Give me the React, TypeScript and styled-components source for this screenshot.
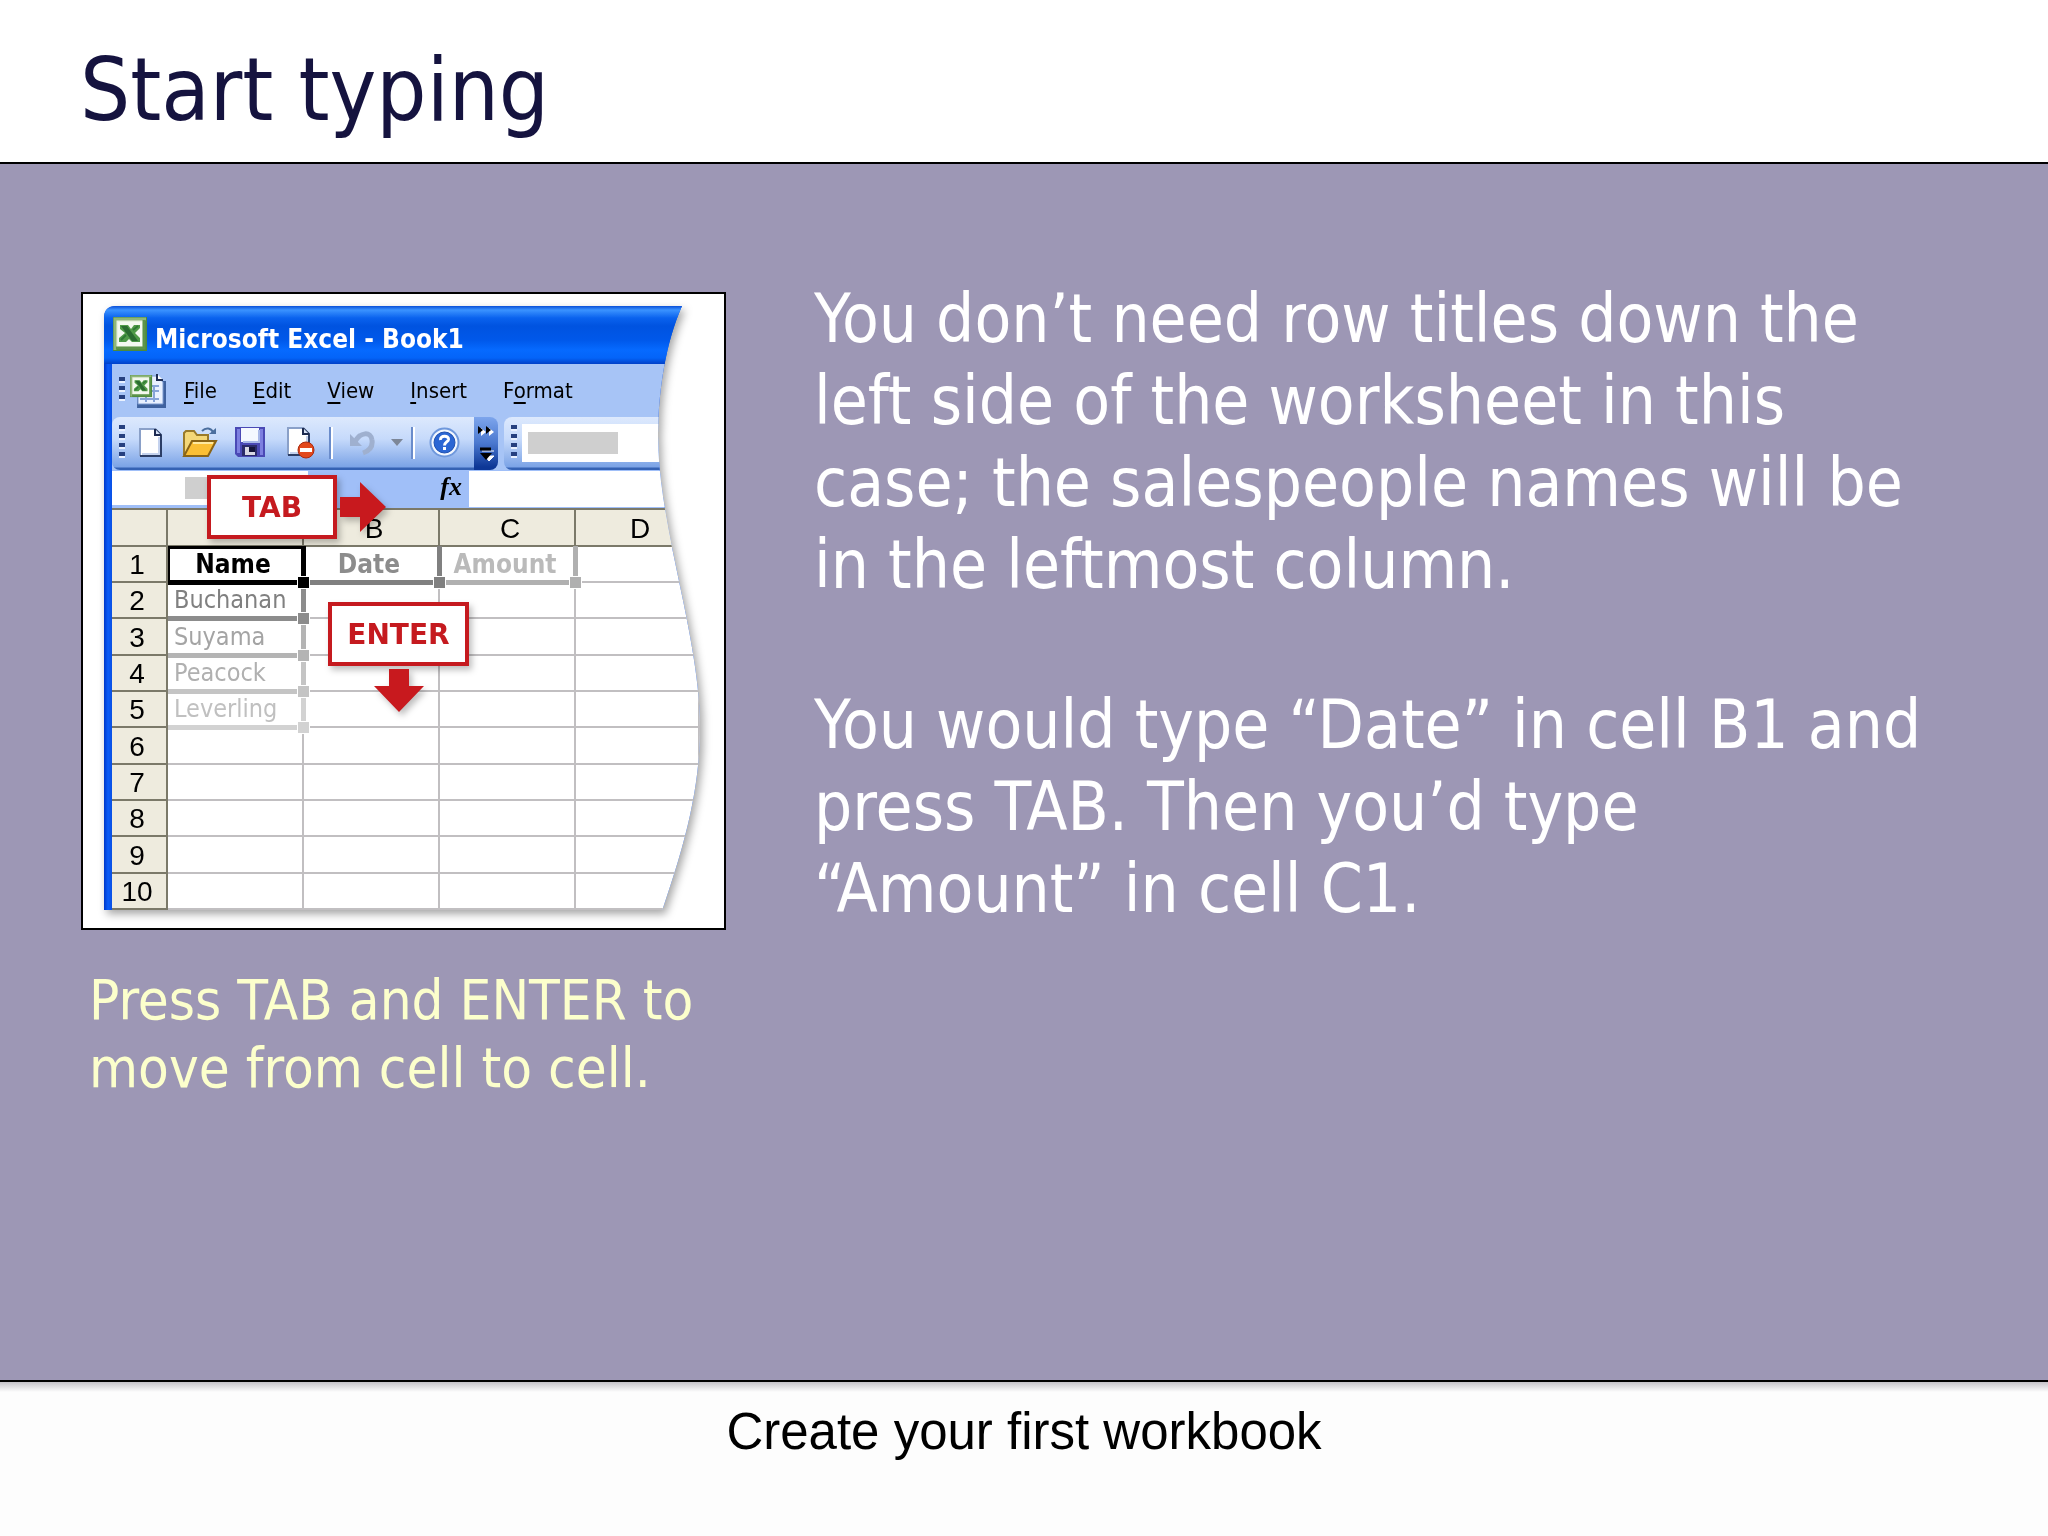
import React from "react";
import styled, { createGlobalStyle, css } from "styled-components";

const slideFont = `"DejaVu Sans Condensed", "Noto Sans", sans-serif`;

const GlobalStyle = createGlobalStyle`
  *, *::before, *::after { box-sizing: border-box; }
  body { margin: 0; background: #fff; }
  h1, p { margin: 0; font-weight: 400; }
  button { font: inherit; color: inherit; }
`;

/* ---------- slide ---------- */

const Slide = styled.div`
  display: flex;
  flex-direction: column;
  min-height: 100vh;
  font-family: ${slideFont};
`;

const Header = styled.header`
  display: flex;
  align-items: center;
  height: 164px;
  padding: 18px 80px 0;
  border-bottom: 2px solid #000;
`;

const Title = styled.h1`
  font-size: 88px;
  line-height: 108px;
  color: #15133f;
`;

const Main = styled.main`
  display: flex;
  flex: 1;
  align-items: flex-start;
  gap: 88px;
  padding: 128px 108px 80px 81px;
  background: #9d97b5;
`;

const Figure = styled.figure`
  flex: none;
  width: 645px;
  margin: 0;
`;

const Frame = styled.div`
  padding: 12px 22px 18px 21px;
  border: 2px solid #000;
  background: #fff;
`;

const Caption = styled.figcaption`
  padding: 36px 0 0 8px;
  font-size: 56px;
  line-height: 68px;
  color: #fcffcc;
`;

const Body = styled.section`
  display: flex;
  flex: 1;
  flex-direction: column;
  gap: 78px;
  margin-top: -14px;
  font-size: 67px;
  line-height: 82px;
  color: #fff;
`;

const Footer = styled.footer`
  height: 156px;
  padding-top: 20px;
  border-top: 2px solid #000;
  background: linear-gradient(#c4c2c8, #fdfdfd 10px);
  font: 51px/60px "Liberation Sans", Arial, sans-serif;
  text-align: center;
  color: #000;
`;

/* ---------- spreadsheet window ---------- */

const WindowShadow = styled.div`
  position: relative;
  filter: drop-shadow(3px 4px 4px rgba(0, 0, 0, 0.35));
`;

const Window = styled.div`
  width: 596px;
  padding-left: 8px;
  background: linear-gradient(90deg, #0038c8, #0a5cf8 4px, #0a50e4 8px);
  clip-path: path("M12 0H578C562 36 554 84 554 130C554 220 596 330 596 421C596 485 580 540 558 605H0V12Q0 0 12 0Z");
  color: #000;
`;

const TitleBar = styled.div`
  display: flex;
  align-items: center;
  gap: 8px;
  height: 58px;
  margin-left: -8px;
  padding: 0 0 2px 9px;
  background: linear-gradient(#0a4fd8 0, #3b93ff 4px, #0a62ee 12px, #0053e0 20px, #0058ea 34px, #066aff 44px, #0464f8 52px, #0040c8 58px);
  color: #fff;
  font-size: 26px;
  font-weight: 700;
`;

const WindowTitle = styled.span`
  padding-top: 10px;
  line-height: 30px;
`;

const MenuBar = styled.div`
  display: flex;
  align-items: center;
  height: 53px;
  padding-left: 7px;
  background: #a7c4f6;
`;

const DocIcon = styled.span`
  display: flex;
  margin: 0 17px 0 5px;
`;

const MenuList = styled.div`
  display: flex;
  gap: 36px;
`;

const MenuButton = styled.button`
  padding: 0;
  border: 0;
  background: none;
  font-size: 22px;
  line-height: 28px;
  u {
    text-decoration-thickness: 2px;
    text-underline-offset: 4px;
  }
`;

const Grip = styled.span<{ $dots: number }>`
  flex: none;
  width: 6px;
  height: ${(p) => p.$dots * 9}px;
  background: repeating-linear-gradient(#26407f 0 4px, #e9f1ff 4px 6px, transparent 6px 9px);
`;

const ToolRow = styled.div`
  display: flex;
  height: 53px;
  background: #a7c4f6;
`;

const barShade = css`
  background: linear-gradient(#dde9fd, #c6dafb 22px, #7ba3e6 50px, #3562b4 51px);
`;

const Toolbar = styled.div`
  ${barShade}
  display: flex;
  align-items: center;
  width: 362px;
  padding: 0 0 2px 7px;
  border-radius: 8px 0 0 8px;
`;

const FontToolbar = styled.div`
  ${barShade}
  display: flex;
  flex: 1;
  align-items: center;
  gap: 5px;
  margin-left: 6px;
  padding: 0 0 2px 7px;
  border-radius: 8px 0 0 8px;
`;

const ToolButton = styled.button<{ $narrow?: boolean }>`
  display: flex;
  align-items: center;
  justify-content: center;
  width: ${(p) => (p.$narrow ? 20 : 50)}px;
  height: 44px;
  padding: 0;
  border: 0;
  background: none;
`;

const Separator = styled.span`
  width: 4px;
  height: 32px;
  margin: 0 4px;
  border-left: 2px solid #6a8ccb;
  border-right: 2px solid #fff;
`;

const Overflow = styled.button`
  display: flex;
  flex-direction: column;
  align-items: center;
  justify-content: center;
  width: 24px;
  padding: 0;
  border: 0;
  border-radius: 0 8px 8px 0;
  background: linear-gradient(#7da5ec, #4a78cf 26px, #0d3796 50px);
`;

const FontBox = styled.div`
  flex: 1;
  height: 38px;
  padding: 8px 6px;
  background: #fff;
`;

const Placeholder = styled.span<{ $width: number }>`
  display: block;
  width: ${(p) => p.$width}px;
  height: 22px;
  background: #cfcfcf;
`;

const FormulaRow = styled.div`
  display: flex;
  height: 38px;
  padding: 1px 0;
  background: #a0bff8;
`;

const NameBox = styled.div`
  width: 196px;
  height: 34px;
  padding: 6px 0 0 73px;
  background: #fff;
`;

const FxLabel = styled.label`
  flex: 1;
  padding-right: 7px;
  font: italic 700 26px/32px "Liberation Serif", serif;
  text-align: right;
`;

const FormulaInput = styled.input`
  width: 231px;
  padding: 0;
  border: 0;
  background: #fff;
`;

/* ---------- sheet ---------- */

const Sheet = styled.table`
  width: 588px;
  border-spacing: 0;
  table-layout: fixed;
  background: #fff;
  thead tr { height: 39px; }
  tbody tr { height: 36px; }
  tbody tr:nth-child(3n) { height: 37px; }
`;

const HeadCell = styled.th<{ $top?: boolean }>`
  padding: ${(p) => (p.$top ? "3px 0 0 6px" : "2px 4px 0 0")};
  border: 0 solid #7b7969;
  border-width: ${(p) => (p.$top ? "2px 2px 2px 0" : "0 2px 2px 0")};
  background: #eeebde;
  font: 400 28px/32px "Liberation Sans", Arial, sans-serif;
`;

const Cell = styled.td<{ $text?: string; $line?: string; $bold?: boolean; $framed?: boolean }>`
  position: relative;
  padding: 0 0 0 6px;
  border: 0 solid #c1bfc1;
  border-width: 0 2px 2px 0;
  font-size: 25px;
  line-height: 30px;
  ${(p) => p.$bold && css`
    padding: 0 4px 0 0;
    font-size: 26px;
    font-weight: 700;
    text-align: center;
  `}
  ${(p) => p.$text && css`
    color: ${p.$text};
    &::before {
      content: "";
      position: absolute;
      z-index: 1;
      inset: -1px -4px -4px 0;
      border: 0 solid ${p.$line};
      border-width: ${p.$framed ? "3px 5px 5px 2px" : "0 5px 5px 0"};
    }
    &::after {
      content: "";
      position: absolute;
      z-index: 2;
      right: -7px;
      bottom: -7px;
      width: 11px;
      height: 11px;
      background: ${p.$line};
      outline: 1px solid #fff;
    }
  `}
`;

/* ---------- key callouts ---------- */

const Callout = styled.div<{ $x: number; $y: number; $down?: boolean }>`
  position: absolute;
  z-index: 3;
  left: ${(p) => p.$x}px;
  top: ${(p) => p.$y}px;
  display: flex;
  flex-direction: ${(p) => (p.$down ? "column" : "row")};
  align-items: center;
  gap: 3px;
  filter: drop-shadow(3px 4px 3px rgba(0, 0, 0, 0.25));
`;

const Key = styled.kbd<{ $width: number }>`
  width: ${(p) => p.$width}px;
  height: 64px;
  border: 4px solid #c51a1f;
  background: #fff;
  color: #c51a1f;
  font: 700 28px/58px "DejaVu Sans", Verdana, sans-serif;
  text-align: center;
`;

/* ---------- icons ---------- */

const ExcelTile = () => (
  <g>
    <rect x="1" y="1" width="32" height="32" fill="#e8f2e0" stroke="#4d8a3c" strokeWidth="2" />
    <path d="M2 33V2H33" fill="none" stroke="#8fb67a" strokeWidth="3" />
    <path d="M3 31H31V3" fill="none" stroke="#5c944a" strokeWidth="3" />
    <rect x="5" y="5" width="24" height="24" fill="#f4f9f0" />
    <path d="M7 8H15L18 12L21 8H27V11L22 16L27 21V25H19L16 22L13 25H6V21L12 16L7 12Z" fill="#4f9a47" />
    <path d="M8 9H14L25 24H19Z" fill="#2a6b30" />
    <path d="M8 23L13 18M20 13L25 9" stroke="#2f7a35" strokeWidth="2" />
  </g>
);

const ExcelIcon = () => (
  <svg width="34" height="34" viewBox="0 0 34 34"><ExcelTile /></svg>
);

const WorkbookIcon = () => (
  <svg width="37" height="36" viewBox="0 0 37 36">
    <path d="M8 8H36V35H7Z" fill="#3f629f" />
    <path d="M8 3H26L33 9V31H8Z" fill="#e9f1ff" stroke="#7c9ad0" strokeWidth="1" />
    <path d="M27 1V7H33" fill="#fff" stroke="#1d2c52" strokeWidth="2" />
    <path d="M22 13H29M22 18H29M10 26H29M16 22V29M24 12V29" stroke="#87a4d8" strokeWidth="2" />
    <g transform="translate(0 2) scale(.65)"><ExcelTile /></g>
  </svg>
);

const PageShape = () => (
  <g>
    <path d="M2 2H17L23 8V29H2Z" fill="#fff" />
    <path d="M2 29V2H17" fill="none" stroke="#8aa0c8" strokeWidth="2" />
    <path d="M17 2L23 8V29H2" fill="none" stroke="#2c3e66" strokeWidth="2" />
    <path d="M4 27H21V10" fill="none" stroke="#c4d2ee" strokeWidth="2" />
    <path d="M17 2V8H23" fill="#d6e1f5" stroke="#1c2a50" strokeWidth="2" />
  </g>
);

const NewIcon = () => (
  <svg width="25" height="31" viewBox="0 0 25 31"><PageShape /></svg>
);

const OpenIcon = () => (
  <svg width="36" height="31" viewBox="0 0 36 31">
    <path d="M2 28V6L4 4H12L15 8H26V14" fill="#f4d778" stroke="#9a7a2a" strokeWidth="2" />
    <path d="M2 29L10 14H34L26 29Z" fill="#fbbf35" stroke="#8a6416" strokeWidth="2" />
    <path d="M11 16H31" stroke="#ffe9a0" strokeWidth="2" />
    <path d="M20 4C24 0 29 1 31 5" fill="none" stroke="#4c6f9e" strokeWidth="2" />
    <path d="M27 7H34V1Z" fill="#4c6f9e" />
  </svg>
);

const SaveIcon = () => (
  <svg width="31" height="31" viewBox="0 0 31 31">
    <path d="M0 0H30V30H3L0 27Z" fill="#4a49b5" />
    <path d="M2 2H5V26H2ZM25 2H28V28H25Z" fill="#7d7fe0" />
    <rect x="6" y="1" width="18" height="14" fill="#f4f8ff" />
    <path d="M24 3V15H8" fill="none" stroke="#a8b8e8" strokeWidth="2" />
    <rect x="7" y="18" width="15" height="11" fill="#2b2b6a" />
    <rect x="10" y="20" width="10" height="8" fill="#d8d8e4" />
    <rect x="14" y="20" width="6" height="5" fill="#15153a" />
  </svg>
);

const PermissionIcon = () => (
  <svg width="29" height="33" viewBox="0 0 29 33">
    <PageShape />
    <circle cx="20" cy="24" r="8" fill="#e2481c" stroke="#a82a10" strokeWidth="1" />
    <rect x="14" y="22" width="12" height="4" fill="#fff" />
  </svg>
);

const UndoIcon = () => (
  <svg width="27" height="26" viewBox="0 0 27 26">
    <path d="M6 12C11 2 22 1 23 10C24 17 20 21 14 23" fill="none" stroke="#9fb0cf" strokeWidth="5" />
    <path d="M1 4V16H13Z" fill="#9fb0cf" />
  </svg>
);

const CaretIcon = () => (
  <svg width="12" height="7" viewBox="0 0 12 7"><path d="M0 0H12L6 7Z" fill="#7d8798" /></svg>
);

const HelpIcon = () => (
  <svg width="31" height="31" viewBox="0 0 31 31">
    <circle cx="15.5" cy="15.5" r="14" fill="#f2f7ff" stroke="#6f98dc" strokeWidth="2" />
    <circle cx="15.5" cy="15.5" r="10.5" fill="#2b66d4" stroke="#1d4fae" strokeWidth="1" />
    <path d="M11.5 13C11 8 20 8 19.5 12.5C19 15 15.5 15 15.5 18.5" fill="none" stroke="#fff" strokeWidth="3" />
    <rect x="14" y="20" width="3" height="3" fill="#fff" />
  </svg>
);

const OverflowIcon = () => (
  <svg width="18" height="38" viewBox="0 0 18 38">
    <path d="M4 3L9 7L4 11ZM12 3L17 7L12 11Z" fill="#fff" />
    <path d="M1 1L6 5L1 9ZM9 1L14 5L9 9Z" fill="#000" />
    <path d="M5 26H17M8 31H17L12 36Z" fill="#fff" stroke="#fff" strokeWidth="1" />
    <path d="M3 24H14" stroke="#000" strokeWidth="3" />
    <path d="M3 28H15L9 35Z" fill="#000" />
  </svg>
);

const ArrowRight = () => (
  <svg width="46" height="50" viewBox="0 0 46 50"><path d="M0 15H20V0L46 25L20 50V35H0Z" fill="#c8191e" /></svg>
);

const ArrowDown = () => (
  <svg width="50" height="43" viewBox="0 0 50 43"><path d="M15 0H35V17H50L25 43L0 17H15Z" fill="#c8191e" /></svg>
);

/* ---------- data ---------- */

const menus: [string, string, string][] = [
  ["", "F", "ile"],
  ["", "E", "dit"],
  ["", "V", "iew"],
  ["", "I", "nsert"],
  ["F", "o", "rmat"],
];

type CellData = { text: string; color: string; line: string; bold?: boolean; framed?: boolean };

const cells: Record<string, CellData> = {
  A1: { text: "Name", color: "#000", line: "#000", bold: true, framed: true },
  B1: { text: "Date", color: "#8c8c8c", line: "#808080", bold: true },
  C1: { text: "Amount", color: "#bababa", line: "#b0b0b0", bold: true },
  A2: { text: "Buchanan", color: "#808080", line: "#8c8c8c" },
  A3: { text: "Suyama", color: "#a4a4a4", line: "#b4b4b4" },
  A4: { text: "Peacock", color: "#b0b0b0", line: "#c4c4c4" },
  A5: { text: "Leverling", color: "#c0c0c0", line: "#d2d2d2" },
};

const columns = ["A", "B", "C", "D"];
const rows = Array.from({ length: 10 }, (_, i) => i + 1);

const ExcelWindow = () => (
  <WindowShadow>
    <Window>
      <TitleBar>
        <ExcelIcon />
        <WindowTitle>Microsoft Excel - Book1</WindowTitle>
      </TitleBar>
      <MenuBar>
        <Grip $dots={3} />
        <DocIcon><WorkbookIcon /></DocIcon>
        <MenuList>
          {menus.map(([before, key, after]) => (
            <MenuButton key={before + key + after}>{before}<u>{key}</u>{after}</MenuButton>
          ))}
        </MenuList>
      </MenuBar>
      <ToolRow>
        <Toolbar>
          <Grip $dots={4} />
          <ToolButton aria-label="New"><NewIcon /></ToolButton>
          <ToolButton aria-label="Open"><OpenIcon /></ToolButton>
          <ToolButton aria-label="Save"><SaveIcon /></ToolButton>
          <ToolButton aria-label="Permission"><PermissionIcon /></ToolButton>
          <Separator />
          <ToolButton aria-label="Undo"><UndoIcon /></ToolButton>
          <ToolButton aria-label="Undo list" $narrow><CaretIcon /></ToolButton>
          <Separator />
          <ToolButton aria-label="Help"><HelpIcon /></ToolButton>
        </Toolbar>
        <Overflow aria-label="Toolbar options"><OverflowIcon /></Overflow>
        <FontToolbar>
          <Grip $dots={4} />
          <FontBox><Placeholder $width={90} /></FontBox>
        </FontToolbar>
      </ToolRow>
      <FormulaRow>
        <NameBox><Placeholder $width={60} /></NameBox>
        <FxLabel htmlFor="formula">fx</FxLabel>
        <FormulaInput id="formula" />
      </FormulaRow>
      <Sheet>
        <colgroup>
          <col style={{ width: 56 }} />
          <col style={{ width: 136 }} />
          <col style={{ width: 136 }} />
          <col style={{ width: 136 }} />
          <col />
        </colgroup>
        <thead>
          <tr>
            <HeadCell $top />
            {/* the TAB callout sits over column A's letter */}
            {columns.map((c) => (
              <HeadCell key={c} $top scope="col" aria-label={c}>{c === "A" ? null : c}</HeadCell>
            ))}
          </tr>
        </thead>
        <tbody>
          {rows.map((r) => (
            <tr key={r}>
              <HeadCell scope="row">{r}</HeadCell>
              {columns.map((c) => {
                const cell = cells[c + r];
                return (
                  <Cell key={c} $text={cell?.color} $line={cell?.line} $bold={cell?.bold} $framed={cell?.framed}>
                    {cell?.text}
                  </Cell>
                );
              })}
            </tr>
          ))}
        </tbody>
      </Sheet>
    </Window>
    <Callout $x={103} $y={169}>
      <Key $width={130}>TAB</Key>
      <ArrowRight />
    </Callout>
    <Callout $x={224} $y={296} $down>
      <Key $width={141}>ENTER</Key>
      <ArrowDown />
    </Callout>
  </WindowShadow>
);

export default function App() {
  return (
    <Slide>
      <GlobalStyle />
      <Header>
        <Title>Start typing</Title>
      </Header>
      <Main>
        <Figure>
          <Frame><ExcelWindow /></Frame>
          <Caption>Press TAB and ENTER to move from cell to cell.</Caption>
        </Figure>
        <Body>
          <p>You don’t need row titles down the left side of the worksheet in this case; the salespeople names will be in the leftmost column.</p>
          <p>You would type “Date” in cell B1 and press TAB. Then you’d type “Amount” in cell C1.</p>
        </Body>
      </Main>
      <Footer>Create your first workbook</Footer>
    </Slide>
  );
}
